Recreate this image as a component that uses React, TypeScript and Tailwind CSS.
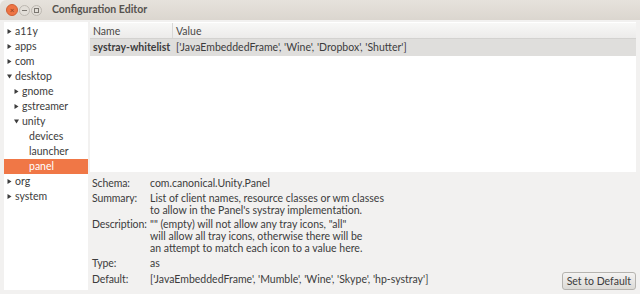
import React from "react";

type Node = { label: string; depth: number; arrow?: "right" | "down"; selected?: boolean };

const tree: Node[] = [
  { label: "a11y", depth: 0, arrow: "right" },
  { label: "apps", depth: 0, arrow: "right" },
  { label: "com", depth: 0, arrow: "right" },
  { label: "desktop", depth: 0, arrow: "down" },
  { label: "gnome", depth: 1, arrow: "right" },
  { label: "gstreamer", depth: 1, arrow: "right" },
  { label: "unity", depth: 1, arrow: "down" },
  { label: "devices", depth: 2 },
  { label: "launcher", depth: 2 },
  { label: "panel", depth: 2, selected: true },
  { label: "org", depth: 0, arrow: "right" },
  { label: "system", depth: 0, arrow: "right" },
];

const pad = ["pl-[11px]", "pl-[18px]", "pl-[25px]"];

function Arrow({ dir }: { dir: "right" | "down" }) {
  return (
    <svg width="5" height="5" viewBox="0 0 5 5" className="absolute left-[-8px] top-[4px]">
      {dir === "right" ? (
        <path d="M0.5 0 L4.5 2.5 L0.5 5 Z" fill="#3c3c3c" />
      ) : (
        <path d="M0 0.5 L5 0.5 L2.5 4.5 Z" fill="#3c3c3c" />
      )}
    </svg>
  );
}

function Detail({ label, className, children }: { label: string; className?: string; children: React.ReactNode }) {
  return (
    <div className={`flex leading-[12px] ${className ?? ""}`}>
      <div className="w-[58px] shrink-0 whitespace-nowrap tracking-[-0.1px]">{label}</div>
      <div className="whitespace-nowrap">{children}</div>
    </div>
  );
}

export default function App() {
  return (
    <div
      className="w-[640px] h-[294px] overflow-hidden bg-[#f2f1f0] text-[10.5px] text-[#3c3c3c] flex flex-col"
      style={{ fontFamily: "Lato, 'Open Sans', sans-serif" }}
    >
      <div className="h-[20px] shrink-0 flex items-center bg-gradient-to-b from-[#e6e2dc] to-[#dbd6cf] rounded-tl-[6px] pl-[6px]">
        <div className="flex items-center">
          <div className="w-[12px] h-[12px] rounded-full bg-[#ee7444] border border-[#cf6035] flex items-center justify-center text-[8px] leading-none text-[#8a3a1a]">
            ×
          </div>
          <div className="w-[11px] h-[11px] ml-[1px] rounded-full bg-[#e2ded8] border border-[#bdb8b1] flex items-center justify-center">
            <div className="w-[5px] h-[1px] bg-[#7a7670]" />
          </div>
          <div className="w-[11px] h-[11px] ml-[1px] rounded-full bg-[#e2ded8] border border-[#bdb8b1] flex items-center justify-center">
            <div className="w-[5px] h-[5px] border border-[#7a7670]" />
          </div>
        </div>
        <div className="ml-[10px] font-bold text-[10.5px] text-[#55524e]">Configuration Editor</div>
      </div>

      <div className="flex-1 flex pl-[4px] pr-[4px] pt-[2px] gap-[2px] min-h-0">
        <div className="w-[84px] shrink-0 bg-white pt-[2px] mb-[4px]">
          {tree.map((n) => (
            <div
              key={n.label}
              className={`h-[15px] leading-[15px] ${pad[n.depth]} ${
                n.selected ? "bg-[#f07746] text-white" : ""
              }`}
            >
              <span className="relative">
                {n.arrow && <Arrow dir={n.arrow} />}
                {n.label}
              </span>
            </div>
          ))}
        </div>

        <div className="flex-1 flex flex-col min-w-0">
          <div className="h-[150px] shrink-0 bg-white pt-[1px]">
            <div className="flex h-[16px] leading-[16px] bg-gradient-to-b from-[#f8f8f7] to-[#ecebea] border-b border-[#d3d2d0] text-[#4a4845]">
              <div className="w-[83px] pl-[3px] border-r border-[#d9d8d6]">Name</div>
              <div className="pl-[3px]">Value</div>
            </div>
            <div className="flex h-[17px] leading-[17px] bg-[#dfdedc]">
              <div className="w-[83px] pl-[3px] font-bold whitespace-nowrap">systray-whitelist</div>
              <div className="pl-[3px] whitespace-nowrap">['JavaEmbeddedFrame', 'Wine', 'Dropbox', 'Shutter']</div>
            </div>
          </div>

          <div className="flex-1 relative pl-[2px] pt-[5px] flex flex-col text-[#3c3c3c]">
            <Detail label="Schema:">com.canonical.Unity.Panel</Detail>
            <Detail label="Summary:" className="mt-[3px]">
              List of client names, resource classes or wm classes
              <br />
              to allow in the Panel's systray implementation.
            </Detail>
            <Detail label="Description:" className="mt-[2px]">
              "" (empty) will not allow any tray icons, "all"
              <br />
              will allow all tray icons, otherwise there will be
              <br />
              an attempt to match each icon to a value here.
            </Detail>
            <Detail label="Type:" className="mt-[3px]">as</Detail>
            <Detail label="Default:" className="mt-[4px]">['JavaEmbeddedFrame', 'Mumble', 'Wine', 'Skype', 'hp-systray']</Detail>
            <button className="absolute right-0 bottom-[4px] h-[18px] px-[4px] rounded-[3px] border border-[#b5b3af] bg-gradient-to-b from-[#f4f3f2] to-[#dcdad6] text-[10.5px] leading-none text-[#3c3c3c]">
              Set to Default
            </button>
          </div>
        </div>
      </div>
    </div>
  );
}
